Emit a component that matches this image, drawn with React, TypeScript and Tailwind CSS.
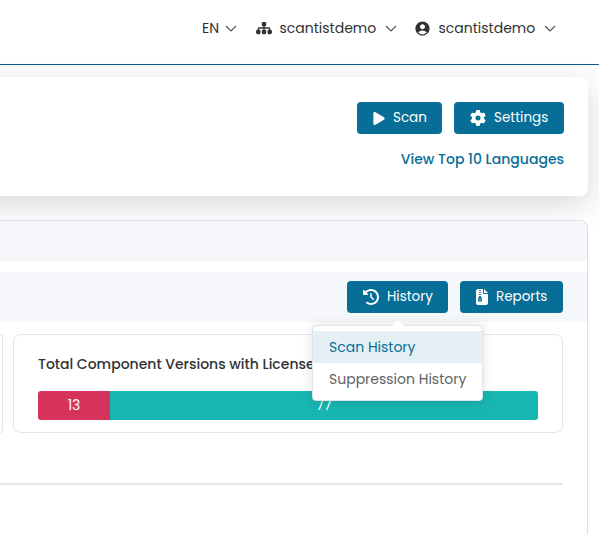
import type { ReactNode } from "react";
import { FaSitemap, FaPlay, FaGear, FaClockRotateLeft, FaFileZipper } from "react-icons/fa6";
import { MdAccountCircle } from "react-icons/md";

function Chevron() {
  return (
    <svg viewBox="0 0 12 7" className="h-[7px] w-3 shrink-0" fill="none" stroke="#4b4e54" strokeWidth="1.1">
      <path d="M1 1l5 5 5-5" />
    </svg>
  );
}

function Button({ icon, children, className }: { icon: ReactNode; children: ReactNode; className: string }) {
  return (
    <button
      className={`flex h-8 items-center rounded-[4px] bg-[#066e97] pl-4 text-[13.5px] leading-none text-white ${className}`}
    >
      {icon}
      <span className="whitespace-nowrap pb-px">{children}</span>
    </button>
  );
}

function Header() {
  return (
    <header className="flex h-[65px] items-start justify-end border-b border-[#075f86] bg-white pr-[43px] text-sm text-[#303133]">
      <div className="flex h-14 items-center">
        <span className="w-[17px]">EN</span>
        <span className="ml-1.5 mr-[19px] flex">
          <Chevron />
        </span>
        <FaSitemap className="h-[14px] w-4" />
        <span className="ml-[7.5px] w-[97.5px] whitespace-nowrap">scantistdemo</span>
        <span className="ml-2 mr-[17px] flex">
          <Chevron />
        </span>
        <MdAccountCircle className="size-[17px]" />
        <span className="ml-[7.5px] w-[97.5px] whitespace-nowrap">scantistdemo</span>
        <span className="ml-2 flex">
          <Chevron />
        </span>
      </div>
    </header>
  );
}

function HistoryMenu() {
  return (
    <div className="absolute left-[-35px] top-11 z-10 w-[171px] rounded-[4px] border border-[#e0e3ea] bg-white py-[5px] text-sm shadow-[0_0_12px_rgba(0,0,0,0.12)]">
      <span className="absolute left-[81px] top-[-4px] size-2 rotate-45 bg-white" />
      <div className="flex h-8 items-center bg-[#e5f0f5] pl-4 text-[#066e97]">
        <span className="whitespace-nowrap">Scan History</span>
      </div>
      <div className="flex h-8 items-center pl-4 text-[#606266]">
        <span className="whitespace-nowrap">Suppression History</span>
      </div>
    </div>
  );
}

export default function App() {
  return (
    <div className="h-[534px] w-[599px] overflow-hidden bg-white font-['Poppins','Inter',sans-serif]">
      <Header />
      <section className="-ml-16 mt-3 h-[119px] w-[652px] rounded-lg bg-white pr-6 pt-[25px] shadow-[0_8px_32px_rgba(0,0,0,0.16)]">
        <div className="flex justify-end gap-3">
          <Button className="w-[85px]" icon={<FaPlay className="mr-2 h-[15px] w-3" />}>
            Scan
          </Button>
          <Button className="w-[110px]" icon={<FaGear className="mr-2 size-4" />}>
            Settings
          </Button>
        </div>
        <div className="mt-[15px] text-right text-sm font-medium text-[#066e97]">View Top 10 Languages</div>
      </section>

      <section className="mt-6 h-[340px] w-[588px] rounded-tr-lg border-r border-t border-[#dcdfe8] bg-white">
        <div className="h-10 rounded-tr-lg bg-[#f5f7fb]" />
        <div className="mt-[11px] flex h-[50px] justify-end gap-3 bg-[#f5f7fb] pr-6 pt-[9px]">
          <div className="relative">
            <Button className="w-[101px]" icon={<FaClockRotateLeft className="mr-2 size-4" />}>
              History
            </Button>
            <HistoryMenu />
          </div>
          <Button className="w-[103px]" icon={<FaFileZipper className="mr-2 h-4 w-3" />}>
            Reports
          </Button>
        </div>
        <div className="mt-3 flex gap-2.5">
          <div className="h-[99px] w-[3px] rounded-r-lg border border-l-0 border-[#e4e6ee]" />
          <div className="h-[99px] w-[550px] rounded-lg border border-[#e4e6ee] px-6 pt-[19px] text-sm">
            <div className="whitespace-nowrap font-medium text-[#303133]">Total Component Versions with License Issues</div>
            <div className="mt-[17px] flex h-[29px] overflow-hidden rounded-[3px] text-white">
              <div className="flex w-[72px] items-center justify-center bg-[#d6335c] pb-px">13</div>
              <div className="flex flex-1 items-center justify-center bg-[#18b5b1] pb-px">77</div>
            </div>
          </div>
        </div>
        <div className="mr-6 mt-[50px] h-0.5 bg-[#e4e6ee]" />
      </section>
    </div>
  );
}
